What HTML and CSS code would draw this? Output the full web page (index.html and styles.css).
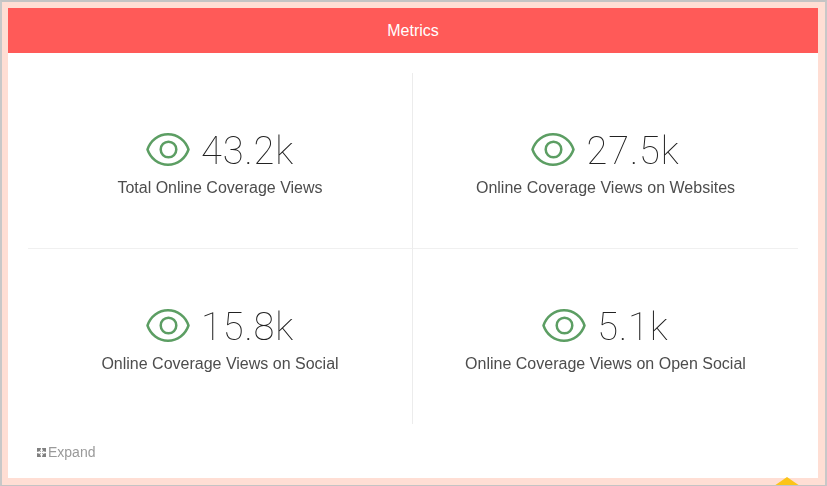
FILE: index.html
```html
<!DOCTYPE html>
<html lang="en">
<head>
<meta charset="utf-8">
<title>Metrics</title>
<link rel="stylesheet" href="styles.css">
</head>
<body>
<svg class="defs" width="0" height="0" aria-hidden="true">
  <symbol id="eye" viewBox="0 0 44 34">
    <path d="M1.500 16.500C4.500 7.500 12.500 1.300 22 1.300S39.500 7.500 42.500 16.500C39.500 25.500 31.500 31.700 22 31.700S4.500 25.500 1.500 16.500Z" fill="none" stroke="currentColor" stroke-width="2.500" stroke-linejoin="round"/>
    <circle cx="22.500" cy="16.500" r="7.800" fill="none" stroke="currentColor" stroke-width="2.500"/>
  </symbol>
</svg>
<main class="panel">
  <header class="panel-head">Metrics</header>
  <section class="grid">
    <div class="cell cell-tl">
      <div class="stat"><svg class="eye"><use href="#eye"/></svg><span class="value">43.2k</span></div>
      <div class="label">Total Online Coverage Views</div>
    </div>
    <div class="cell cell-tr">
      <div class="stat"><svg class="eye"><use href="#eye"/></svg><span class="value">27.5k</span></div>
      <div class="label">Online Coverage Views on Websites</div>
    </div>
    <div class="cell cell-bl">
      <div class="stat"><svg class="eye"><use href="#eye"/></svg><span class="value">15.8k</span></div>
      <div class="label">Online Coverage Views on Social</div>
    </div>
    <div class="cell cell-br">
      <div class="stat"><svg class="eye"><use href="#eye"/></svg><span class="value">5.1k</span></div>
      <div class="label">Online Coverage Views on Open Social</div>
    </div>
  </section>
  <footer class="expand">
    <svg class="expand-icon" viewBox="0 0 10 10"><path d="M0 0h4.300v1.500L3.200 2.500 4.400 3.700 3.700 4.400 2.500 3.200 1.500 4.300H0ZM10 0v4.300H8.500L7.500 3.200 6.300 4.400 5.600 3.700 6.800 2.500 5.700 1.500V0ZM0 10V5.700h1.500L2.500 6.800 3.700 5.600 4.400 6.300 3.200 7.500 4.300 8.500V10ZM10 10H5.700V8.500L6.800 7.500 5.600 6.300 6.300 5.600 7.500 6.800 8.500 5.700H10Z"/></svg><span>Expand</span>
  </footer>
</main>
<div class="marker"></div>
</body>
</html>
```
FILE: styles.css
```css
* { box-sizing: border-box; }
html, body { height: 100%; }
body {
  margin: 0;
  width: 827px;
  height: 486px;
  overflow: hidden;
  position: relative;
  background: #ffded4;
  border-top: 2px solid #c4c4c4;
  border-left: 2px solid #c8c8c8;
  border-right: 2px solid #c8c8c8;
  border-bottom: 1px solid #c4c4c4;
  padding: 6px 7px 6px 6px;
  font-family: "Liberation Sans", Arial, sans-serif;
}
.defs { position: absolute; }
.panel {
  width: 810px;
  height: 470px;
  background: #fff;
  display: flex;
  flex-direction: column;
}
.panel-head {
  height: 45px;
  background: #ff5a58;
  color: #fff;
  font-size: 16px;
  line-height: 45px;
  text-align: center;
}
.grid {
  margin: 20px 20px 0;
  width: 770px;
  display: grid;
  grid-template-columns: 385px 385px;
  grid-template-rows: 176px 175px;
}
.cell {
  display: flex;
  flex-direction: column;
  align-items: center;
  padding-top: 58px;
}
.cell-tl { border-right: 1px solid #ececec; border-bottom: 1px solid #f0f0f0; }
.cell-tr { border-bottom: 1px solid #f0f0f0; }
.cell-bl { border-right: 1px solid #ececec; }
.stat {
  display: flex;
  align-items: center;
  gap: 11px;
  height: 38px;
}
.eye { width: 44px; height: 34px; color: #5c9e63; }
.value {
  padding-top: 2px;
  font-family: Roboto, "Liberation Sans", sans-serif;
  font-weight: 100;
  font-size: 38px;
  letter-spacing: 0.9px;
  line-height: 38px;
  color: #222;
  will-change: opacity;
}
.label {
  margin-top: 9px;
  font-size: 16px;
  line-height: 20px;
  color: #4d4d4d;
  will-change: opacity;
}
.expand {
  margin: 18px 0 0 29px;
  display: flex;
  align-items: center;
  gap: 2px;
  font-size: 14px;
  line-height: 20px;
  color: #9a9a9a;
  will-change: opacity;
}
.expand-icon { width: 9px; height: 9px; fill: #808080; }
.marker {
  position: absolute;
  left: 772px;
  top: 475px;
  width: 0;
  height: 0;
  border-left: 13px solid transparent;
  border-right: 13px solid transparent;
  border-bottom: 9px solid #fcc419;
}
```
